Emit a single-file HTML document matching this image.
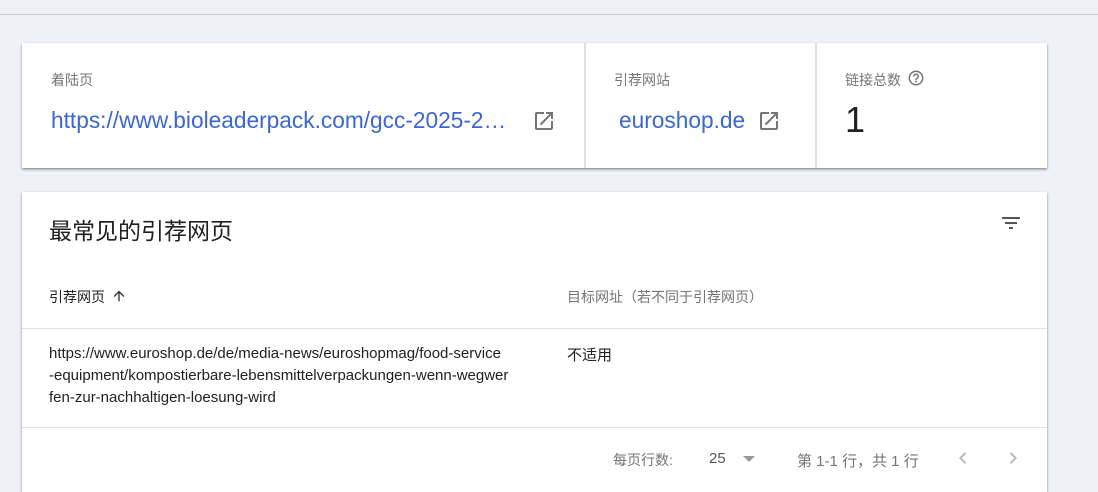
<!DOCTYPE html>
<html><head><meta charset="utf-8"><style>
*{margin:0;padding:0;box-sizing:border-box}
body{width:1098px;height:486px;overflow:hidden;background:#eef1f6;font-family:"Liberation Sans","Noto Sans CJK SC",sans-serif;position:relative}
.topline{position:absolute;left:0;top:14px;width:1098px;height:1px;background:#cacdd1}
.card{position:absolute;background:#fff;box-shadow:0 1px 2px rgba(0,0,0,.35),0 2px 3px rgba(0,0,0,.15)}
.lbl{position:absolute;font-size:14px;color:#757575}
.link{position:absolute;font-size:22.7px;color:#3b66d6}
.div{position:absolute;top:0;width:2px;height:125px;background:#e0e0e0}
.abs{position:absolute}
</style></head><body>
<div class="topline"></div>
<div class="card" style="left:22px;top:43px;width:1025px;height:125px">
 <div class="lbl" style="left:29px;top:27px">着陆页</div>
 <div class="link" style="left:29px;top:64px">https://www.bioleaderpack.com/gcc-2025-2…</div>
 <svg class="abs" style="left:510px;top:66px" width="24" height="24" viewBox="0 0 24 24"><path fill="#757575" d="M19 19H5V5h7V3H5a2 2 0 0 0-2 2v14a2 2 0 0 0 2 2h14c1.1 0 2-.9 2-2v-7h-2v7zM14 3v2h3.59l-9.83 9.83 1.41 1.41L19 6.41V10h2V3h-7z"/></svg>
 <div class="div" style="left:562px"></div>
 <div class="lbl" style="left:592px;top:27px">引荐网站</div>
 <div class="link" style="left:597px;top:64px">euroshop.de</div>
 <svg class="abs" style="left:735px;top:66px" width="24" height="24" viewBox="0 0 24 24"><path fill="#757575" d="M19 19H5V5h7V3H5a2 2 0 0 0-2 2v14a2 2 0 0 0 2 2h14c1.1 0 2-.9 2-2v-7h-2v7zM14 3v2h3.59l-9.83 9.83 1.41 1.41L19 6.41V10h2V3h-7z"/></svg>
 <div class="div" style="left:793px"></div>
 <div class="lbl" style="left:823px;top:27px">链接总数</div>
 <svg class="abs" style="left:885px;top:26px" width="18" height="18" viewBox="0 0 24 24"><path fill="#757575" d="M11 18h2v-2h-2v2zm1-16C6.48 2 2 6.48 2 12s4.48 10 10 10 10-4.48 10-10S17.52 2 12 2zm0 18c-4.41 0-8-3.59-8-8s3.59-8 8-8 8 3.59 8 8-3.59 8-8 8zm0-14c-2.21 0-4 1.79-4 4h2c0-1.1.9-2 2-2s2 .9 2 2c0 2-3 1.75-3 5h2c0-2.25 3-2.5 3-5 0-2.21-1.79-4-4-4z"/></svg>
 <div class="abs" style="left:823px;top:56px;font-size:36px;color:#212121">1</div>
</div>
<div class="card" style="left:22px;top:192px;width:1025px;height:300px">
 <div class="abs" style="left:27px;top:20px;font-size:23px;color:#212121">最常见的引荐网页</div>
 <svg class="abs" style="left:977px;top:19px" width="24" height="24" viewBox="0 0 24 24"><path fill="#555" d="M3 6h18v2H3zM6 11h12v2H6zM10 16h4v2h-4z"/></svg>
 <div class="abs" style="left:27px;top:95px;font-size:14px;color:#212121">引荐网页</div>
 <svg class="abs" style="left:89px;top:96px" width="16" height="16" viewBox="0 0 24 24"><path fill="#333" d="M4 12l1.41 1.41L11 7.83V20h2V7.83l5.58 5.59L20 12l-8-8-8 8z"/></svg>
 <div class="abs" style="left:545px;top:95px;font-size:14px;color:#757575">目标网址（若不同于引荐网页）</div>
 <div class="abs" style="left:0;top:136px;width:1025px;height:1px;background:#e0e0e0"></div>
 <div class="abs" style="left:27px;top:151px;width:500px;font-size:15px;line-height:22px;color:#212121">https://www.euroshop.de/de/media-news/euroshopmag/food-service<br>-equipment/kompostierbare-lebensmittelverpackungen-wenn-wegwer<br>fen-zur-nachhaltigen-loesung-wird</div>
 <div class="abs" style="left:545px;top:152px;font-size:15px;color:#212121">不适用</div>
 <div class="abs" style="left:0;top:235px;width:1025px;height:1px;background:#e0e0e0"></div>
 <div class="abs" style="left:591px;top:258px;font-size:14px;color:#757575">每页行数:</div>
 <div class="abs" style="left:687px;top:258px;font-size:15px;color:#555">25</div>
 <div class="abs" style="left:721px;top:264px;width:0;height:0;border-left:6px solid transparent;border-right:6px solid transparent;border-top:6px solid #999"></div>
 <div class="abs" style="left:775px;top:258px;font-size:15px;color:#757575">第 1-1 行，共 1 行</div>
 <svg class="abs" style="left:929px;top:254px" width="24" height="24" viewBox="0 0 24 24"><path fill="#bbb" d="M15.41 7.41L14 6l-6 6 6 6 1.41-1.41L10.83 12z"/></svg>
 <svg class="abs" style="left:979px;top:254px" width="24" height="24" viewBox="0 0 24 24"><path fill="#bbb" d="M10 6L8.59 7.41 13.17 12l-4.58 4.59L10 18l6-6z"/></svg>
</div>
</body></html>
